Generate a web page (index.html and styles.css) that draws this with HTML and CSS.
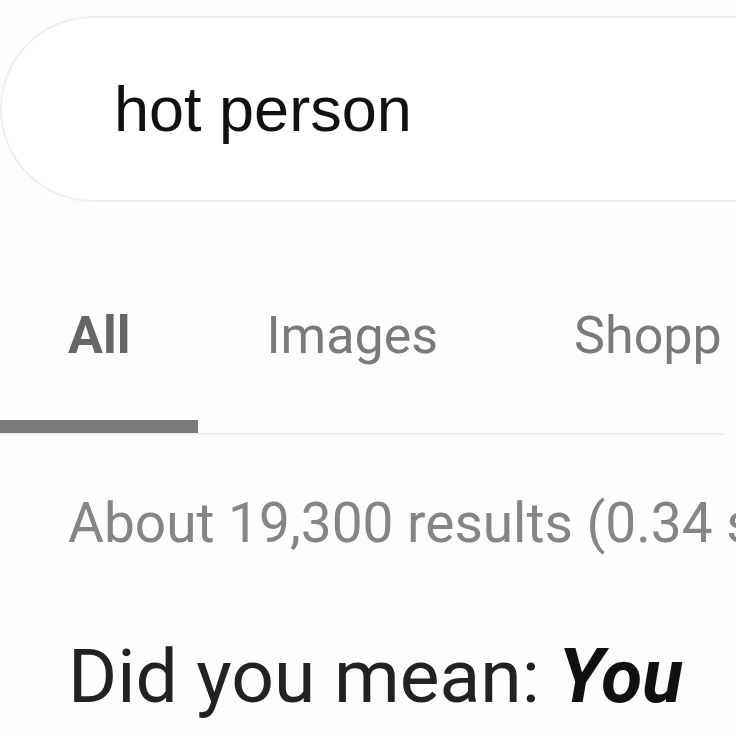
FILE: index.html
```html
<!DOCTYPE html>
<html lang="en">
<head>
  <meta charset="UTF-8" />
  <meta name="viewport" content="width=device-width, initial-scale=1" />
  <title>hot person - Search</title>
  <link rel="stylesheet" href="styles.css">
</head>
<body>

  <div class="search-box">
    <span class="query">hot person</span>
  </div>

  <nav class="tabs">
    <a class="tab active">All</a>
    <a class="tab">Images</a>
    <a class="tab">Shopp</a>
  </nav>

  <p class="result-stats">About 19,300 results (0.34 s</p>

  <p class="suggestion">Did you mean: <b><i>You</i></b></p>

</body>
</html>
```

FILE: styles.css
```css
/* Reset + base */
* {
  box-sizing: border-box;
}
html, body {
  overflow: hidden;
}
body {
  margin: 0;
  width: 736px;
  height: 736px;
  background: #fdfdfd;
  font-family: Roboto, 'Liberation Sans', sans-serif;
  color: #222;
}

/* Search box */
.search-box {
  margin-top: 16px;
  width: 736px;
  height: 186px;
  display: flex;
  align-items: center;
  padding-left: 112px;
  background: #fff;
  border: 2px solid #efefef;
  border-right: none;
  border-radius: 93px 0 0 93px;
}

.query {
  font-family: 'Liberation Sans', Arial, sans-serif;
  font-size: 63px;
  line-height: 72px;
  color: #111;
}

/* Tabs */
.tabs {
  display: flex;
  margin-top: 103px;
  width: 724px;
  border-bottom: 2px solid #efefef;
  white-space: nowrap;
  overflow: hidden;
}

.tab {
  padding: 0 68px 53px;
  font-size: 52px;
  line-height: 62px;
  color: #7a7a7a;
  border-bottom: 13px solid transparent;
}

.tab.active {
  color: #666;
  font-weight: 700;
  border-bottom-color: #7b7b7b;
}

/* Results */
.result-stats {
  margin: 55px 0 0;
  padding-left: 68px;
  font-size: 55px;
  line-height: 66px;
  color: #858585;
  white-space: nowrap;
  overflow: hidden;
}

.suggestion {
  margin: 76px 0 0;
  padding-left: 68px;
  font-size: 75px;
  line-height: 88px;
  color: #222;
  white-space: nowrap;
}

.suggestion b {
  color: #111;
}
```
